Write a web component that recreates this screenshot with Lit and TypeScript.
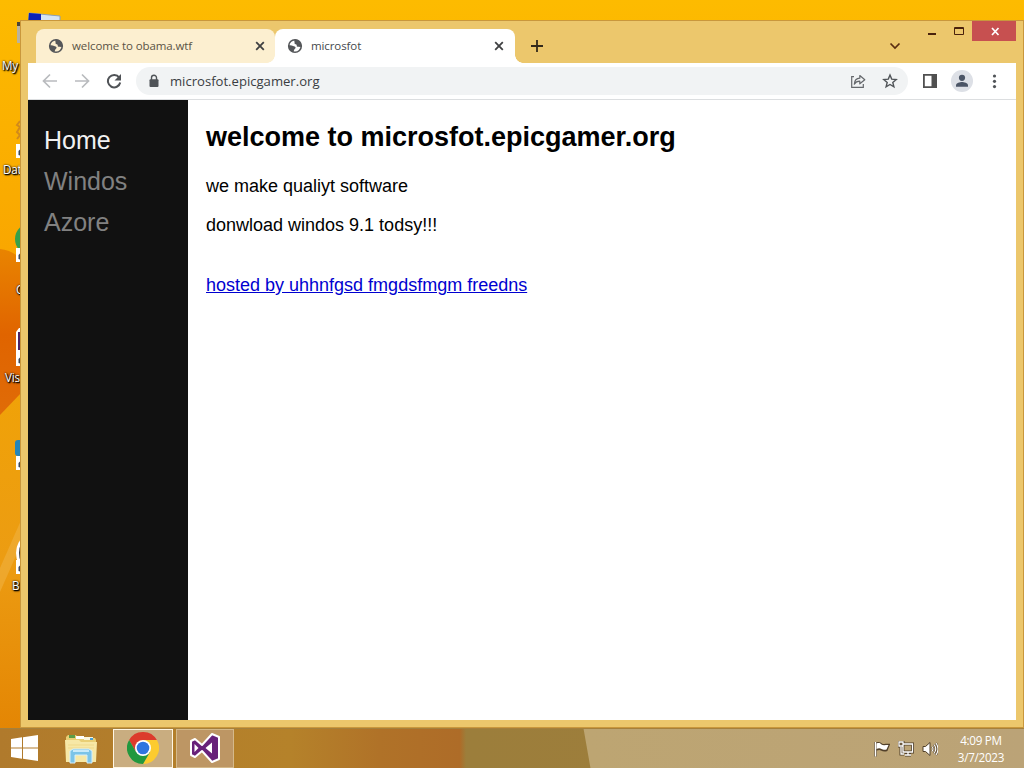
import { LitElement, html, svg, css } from 'lit';
import { customElement, property } from 'lit/decorators.js';
import { classMap } from 'lit/directives/class-map.js';

const globe = svg`
  <circle cx="8" cy="8" r="6.3" fill="none" stroke="#55575a" stroke-width="1.6"/>
  <path fill="#55575a" d="M8.6 1.6c-1.4.3-1.6 1-1.2 1.9.5 1-.2 1.5.3 2.2.6.6 1.4.3 1.9 1 .5.8-.3 1.3.5 1.9.9.6 1.7-.2 2.5.3.6.4 1.2.1 2-.3C14.500 4.700 12 1.900 8.600 1.600z"/>
  <path fill="#55575a" d="M1.400 7.600c1.400-.5 3.600-.2 4.700.5.9.6 2.500.4 2.500 1.600 0 1-1.200 1-1.400 2-.2.9-.7 1.300-.5 2.600C4 14 1.500 11 1.400 7.600z"/>`;

@customElement('browser-tab')
export class BrowserTab extends LitElement {
  @property() label = '';
  @property({ type: Boolean, reflect: true }) active = false;

  static styles = css`
    :host {
      display: flex;
      width: 239px;
    }

    :host([active]) {
      width: 240px;
    }

    .tab {
      position: relative;
      flex: 1;
      display: flex;
      align-items: center;
      padding: 0 7px 0 12px;
      border-radius: 8px 8px 0 0;
      background: #fcefd0;
      color: #5a5345;
      font-family: 'Open Sans', 'Noto Sans', sans-serif;
    }

    .tab.active {
      padding-right: 8px;
      background: #fff;
      color: #45494d;
    }

    .tab.active::before,
    .tab.active::after {
      content: '';
      position: absolute;
      bottom: 0;
      width: 8px;
      height: 8px;
    }

    .tab.active::before {
      left: -8px;
      background: radial-gradient(circle at 0 0, transparent 7.5px, #fff 8px);
    }

    .tab.active::after {
      right: -8px;
      background: radial-gradient(circle at 100% 0, transparent 7.5px, #fff 8px);
    }

    .label {
      flex: 1;
      margin: 0 0 2px 8px;
      font-size: 11.5px;
      letter-spacing: -0.1px;
      white-space: nowrap;
    }
  `;

  render() {
    return html`
      <div class=${classMap({ tab: true, active: this.active })}>
        <svg width="16" height="16" viewBox="0 0 16 16">${globe}</svg>
        <span class="label">${this.label}</span>
        <svg width="16" height="16" viewBox="0 0 16 16">
          <path d="M4.200 4.200l7.600 7.600M11.800 4.200l-7.600 7.600" stroke="#3f4042" stroke-width="1.800"/>
        </svg>
      </div>
    `;
  }
}

@customElement('browser-window')
export class BrowserWindow extends LitElement {
  links = ['Home', 'Windos', 'Azore'];

  static styles = css`
    :host {
      display: flex;
      flex-direction: column;
      box-sizing: border-box;
      padding: 0 7px 7px 7px;
      border: 1px solid #c9973c;
      background: #ecc76c;
      font-family: 'Open Sans', 'Noto Sans', sans-serif;
    }

    .titlebar {
      display: flex;
      height: 42px;
      flex: none;
    }

    .tabs {
      display: flex;
      margin: 8px 0 0 8px;
    }

    .new-tab {
      margin: 8px 0 0 12px;
      padding: 8px 2px;
    }

    .spacer {
      flex: 1;
    }

    .tab-search {
      margin: 17px 20px 0 0;
    }

    .buttons {
      display: flex;
      align-items: flex-start;
    }

    .close {
      width: 44px;
      height: 20px;
      background: #c75050;
    }

    svg {
      display: block;
    }

    .toolbar {
      display: flex;
      align-items: center;
      height: 36px;
      flex: none;
      padding: 0 14px;
      border-bottom: 1px solid #dcdee0;
      background: #fff;
    }

    .nav {
      display: flex;
      gap: 16px;
      margin-right: 14px;
    }

    .omnibox {
      flex: 1;
      display: flex;
      align-items: center;
      height: 28px;
      padding: 0 10px;
      border-radius: 14px;
      background: #f1f3f4;
    }

    .url {
      flex: 1;
      margin-left: 8px;
      color: #3a3d42;
      font-size: 13.1px;
    }

    .omnibox-actions {
      display: flex;
      gap: 16px;
    }

    .actions {
      display: flex;
      align-items: center;
      gap: 13px;
      margin-left: 14px;
    }

    .page {
      flex: 1;
      display: flex;
      min-height: 0;
      background: #fff;
      font-family: 'Liberation Sans', Arial, sans-serif;
      font-size: 18px;
      line-height: 21px;
      color: #000;
    }

    .sidenav {
      width: 160px;
      box-sizing: border-box;
      padding-top: 20px;
      background: #111;
    }

    .sidenav a {
      display: block;
      padding: 6px 8px 6px 16px;
      color: #818181;
      font-size: 25px;
      line-height: 29px;
    }

    .sidenav a.current {
      color: #f1f1f1;
    }

    .main {
      padding: 0 18px;
    }

    h2 {
      margin: 22px 0 23px;
      font-size: 27px;
      line-height: 31px;
    }

    p {
      margin: 0 0 18px;
    }

    .host {
      display: inline-block;
      margin-top: 21px;
      color: #0000d0;
      text-decoration: underline;
    }
  `;

  renderTitlebar() {
    return html`
      <div class="titlebar">
        <div class="tabs">
          <browser-tab label="welcome to obama.wtf"></browser-tab>
          <browser-tab label="microsfot" active></browser-tab>
        </div>
        <div class="new-tab">
          <svg width="16" height="18" viewBox="0 0 16 18">
            <path d="M8 3v12M2 9h12" stroke="#33291a" stroke-width="1.8"/>
          </svg>
        </div>
        <div class="spacer"></div>
        <svg class="tab-search" width="16" height="16" viewBox="0 0 16 16">
          <path d="M3.500 5.500L8 10 12.500 5.500" fill="none" stroke="#5a2d10" stroke-width="1.700"/>
        </svg>
        <div class="buttons">
          <svg width="22" height="20" viewBox="0 0 22 20"><path d="M5 13h8" stroke="#4a220c" stroke-width="2"/></svg>
          <svg width="27" height="20" viewBox="0 0 27 20">
            <path d="M9.500 6.500h9v7h-9z M9 7.500h10" fill="none" stroke="#4a220c"/>
          </svg>
          <svg class="close" viewBox="0 0 44 20">
            <path d="M20 7l6.500 7M26.500 7l-6.500 7" stroke="#fff" stroke-width="1.700"/>
          </svg>
        </div>
      </div>
    `;
  }

  renderToolbar() {
    return html`
      <div class="toolbar">
        <div class="nav">
          <svg width="16" height="16" viewBox="0 0 16 16" fill="none" stroke="#b9bbbe" stroke-width="1.700">
            <path d="M15 8H2M8 1.500L1.500 8 8 14.500"/>
          </svg>
          <svg width="16" height="16" viewBox="0 0 16 16" fill="none" stroke="#b9bbbe" stroke-width="1.700">
            <path d="M1 8h13M8 1.500L14.500 8 8 14.500"/>
          </svg>
          <svg width="16" height="16" viewBox="0 0 16 16">
            <path d="M13.200 4.600A6.200 6.200 0 1 0 14.200 9.500" fill="none" stroke="#505357" stroke-width="2"/>
            <path d="M15 1v6.500H8.500z" fill="#505357"/>
          </svg>
        </div>
        <div class="omnibox">
          <svg width="16" height="16" viewBox="0 0 16 16">
            <rect x="3.500" y="6.300" width="9" height="7.700" rx="1" fill="#505458"/>
            <path d="M5.500 7V4.800a2.500 2.500 0 0 1 5 0V7" fill="none" stroke="#505458" stroke-width="1.400"/>
          </svg>
          <span class="url">microsfot.epicgamer.org</span>
          <div class="omnibox-actions">
            <svg width="16" height="16" viewBox="0 0 16 16" fill="none" stroke="#65686c" stroke-width="1.200">
              <path d="M4 3.600H1.700v10.700h11.600V11"/>
              <path d="M4.300 11.200c.2-3.800 2-5.800 5.500-6V2.500l5 4.200-5 4.100V8.200c-2.500 0-4.300.9-5.500 3z" stroke-linejoin="round"/>
            </svg>
            <svg width="16" height="16" viewBox="0 0 16 16" fill="none" stroke="#505458" stroke-width="1.400">
              <path d="M8 2l1.700 4.100 4.500.4-3.400 2.900 1.100 4.400L8 11.500l-3.900 2.300 1.100-4.400L1.800 6.500l4.500-.4z"/>
            </svg>
          </div>
        </div>
        <div class="actions">
          <svg width="16" height="16" viewBox="0 0 16 16">
            <path d="M1.900 1.900h12.200v12.200H1.900z" fill="#fff" stroke="#505050" stroke-width="1.800"/>
            <path d="M9.500 2h5v12h-5z" fill="#505050"/>
          </svg>
          <svg width="22" height="22" viewBox="0 0 22 22">
            <circle cx="11" cy="11" r="11" fill="#dde0e6"/>
            <circle cx="11" cy="7.800" r="3.100" fill="#4b5566"/>
            <path d="M5 16.800v-1.600c0-2 4-3.200 6-3.200s6 1.200 6 3.200v1.600z" fill="#4b5566"/>
          </svg>
          <svg width="16" height="16" viewBox="0 0 16 16" fill="#505458">
            <circle cx="8.500" cy="3" r="1.600"/><circle cx="8.500" cy="8.300" r="1.600"/><circle cx="8.500" cy="13.600" r="1.600"/>
          </svg>
        </div>
      </div>
    `;
  }

  render() {
    return html`
      ${this.renderTitlebar()}
      ${this.renderToolbar()}
      <div class="page">
        <nav class="sidenav">
          ${this.links.map((link, i) => html`<a class=${classMap({ current: i === 0 })}>${link}</a>`)}
        </nav>
        <div class="main">
          <h2>welcome to microsfot.epicgamer.org</h2>
          <p>we make qualiyt software</p>
          <p>donwload windos 9.1 todsy!!!</p>
          <a class="host">hosted by uhhnfgsd fmgdsfmgm freedns</a>
        </div>
      </div>
    `;
  }
}

@customElement('task-bar')
export class TaskBar extends LitElement {
  static styles = css`
    :host {
      display: flex;
      box-sizing: border-box;
      border-top: 1px solid #a5803c;
      background:
        linear-gradient(80deg, transparent 581px, #bda572 582px, #bba377 100%),
        linear-gradient(90deg, #b07a2c 0, #b5822a 290px, #b07228 380px, #ae6c28 460px, #9c7e3b 466px, #a07d3c 100%);
      font-family: 'Open Sans', 'Noto Sans', sans-serif;
    }

    .item {
      display: flex;
      align-items: center;
      justify-content: center;
      box-sizing: border-box;
      height: 39px;
    }

    .start {
      width: 50px;
    }

    .start svg {
      margin: 0 2px 2px 0;
    }

    .explorer {
      width: 62px;
    }

    .running {
      width: 58px;
      margin-left: 1px;
      padding-bottom: 1px;
      border: 1px solid #d5b98a;
      background: #bd9664;
    }

    .focused {
      width: 60px;
      border: 1px solid #fff6e4;
      background: #c9ad80;
      margin-right: 2px;
    }

    .tray {
      flex: 1;
      display: flex;
      align-items: center;
      justify-content: flex-end;
      gap: 8px;
    }

    .clock {
      width: 60px;
      margin: 0 13px 0 5px;
      color: #fff;
      font-size: 11.7px;
      line-height: 17px;
      letter-spacing: -0.3px;
      text-align: center;
    }
  `;

  render() {
    return html`
      <div class="item start">
        <svg width="28" height="28" viewBox="0 0 28 28" fill="#fff">
          <path d="M1 5l11-1.700v10.200H1zM13 3.200L28 1v12.500H13zM1 14.500h11v10.200L1 23zM13 14.500h15V27l-15-2.200z"/>
        </svg>
      </div>
      <div class="item explorer">
        <svg width="34" height="32" viewBox="0 0 34 32">
          <path d="M2 4l2-2h8l2 3h17l1 2v21H2z" fill="#e9cf75"/>
          <path d="M5 2h6v3H5z" fill="#5c9d48"/><path d="M12 3h8v3h-8z" fill="#fff"/>
          <path d="M20 4h9v3h-9z" fill="#fbf6dd"/><path d="M26 5h3v2h-3z" fill="#4a9fd5"/>
          <path d="M1 7h14l2 2h16l-1 20H2z" fill="#f7e8a6"/>
          <path d="M4 12h26M4 15h26" stroke="#efd98a"/>
          <path d="M6 30V18l3-2h16l3 2v12h-5v-8H11v8z" fill="#7cc4e8" stroke="#d6effa"/>
          <path d="M9 18h16" stroke="#c8eafa" stroke-width="2"/>
        </svg>
      </div>
      <div class="item running focused">
        <svg width="32" height="32" viewBox="0 0 32 32">
          <path d="M2.140 8A16 16 0 0 1 29.860 8L16 8l-7 12z" fill="#dc3b2c"/>
          <path d="M16 8h13.860A16 16 0 0 1 16 32l7-12z" fill="#fccb2e"/>
          <path d="M2.140 8L9.070 20 23 20 16 32A16 16 0 0 1 2.140 8z" fill="#22983e"/>
          <circle cx="16" cy="16" r="8" fill="#fff"/>
          <circle cx="16" cy="16" r="6.300" fill="#2f75e0"/>
        </svg>
      </div>
      <div class="item running">
        <svg width="32" height="32" viewBox="0 0 32 32" stroke-linejoin="round">
          <path d="M2 9l4-2 7 6L23 2l7 3v22l-7 3-10-11-7 6-4-2z" fill="#68217a" stroke="#fff" stroke-width="2"/>
          <path d="M5.500 12v8l4-4zM16.500 16l6.500 5.500v-11z" fill="#fff"/>
        </svg>
      </div>
      <div class="tray">
        <svg width="16" height="16" viewBox="0 0 16 16">
          <path d="M1.500 1v14.500M2.500 2.500c3-1 4 0 5 1s3.500.5 7 .5l-2 5c-2 .6-4 0-5-.6s-3-.9-5 0z" fill="#fff" stroke="#51402b" stroke-width="2.400"/>
          <path d="M1.500 1v14.500" stroke="#fff" stroke-width="1.400"/>
          <path d="M2.500 2.500c3-1 4 0 5 1s3.500.5 7 .5l-2 4.500c-2 .6-4 0-5-.6s-3-.9-5 0z" fill="#fff"/>
        </svg>
        <svg width="16" height="16" viewBox="0 0 16 16" fill="none">
          <path d="M5 3h9.500v8H5zM3 6v7h3M7 14h6M10 11v3M1 1h4v4H1z" stroke="#51402b" stroke-width="3"/>
          <path d="M5 3h9.500v8H5zM3 6v7h3M7 14h6M10 11v3M1 1h4v4H1z" stroke="#fff" stroke-width="1.300"/>
        </svg>
        <svg width="16" height="16" viewBox="0 0 16 16" fill="none">
          <path d="M10 5.500q2 2.500 0 5M12 3.500q3.500 4.500 0 9M14 2q4 6 0 12" stroke="#51402b" stroke-width="2"/>
          <path d="M10 5.500q2 2.500 0 5M12 3.500q3.500 4.500 0 9M14 2q4 6 0 12" stroke="#fff" stroke-width="1.1"/>
          <path d="M1 5.500h2.500L8 1.500v13l-4.500-4H1z" fill="#fff" stroke="#51402b"/>
        </svg>
        <div class="clock">4:09 PM<br>3/7/2023</div>
      </div>
    `;
  }
}

@customElement('app-root')
export class AppRoot extends LitElement {
  shortcuts = [
    {
      label: 'My',
      indent: 2,
      top: 0,
      art: svg`<path d="M29 13l31 3v10H29z" fill="#d6e4f2" stroke="#8aa0b8"/><path d="M29 13l12 1v10H28z" fill="#0a23b8"/><path d="M17 22h5v21h-5z" fill="#b9b2a0"/><path d="M17 22h4v4h-4z" fill="#4c4538"/>`,
    },
    {
      label: 'Dat',
      indent: 3,
      top: 104,
      art: svg`<path d="M20 17l-3 4 3 2-3 5 3 3-3 4" fill="none" stroke="#d18a1c" stroke-width="2"/>`,
    },
    {
      // the label wraps, only the second line sticks out from under the window
      label: html`<br>C`,
      indent: 16,
      top: 208,
      art: svg`<circle cx="31" cy="31" r="16" fill="#35a04a"/>`,
    },
    {
      label: 'Vis',
      indent: 5,
      top: 312,
      art: svg`<path d="M16 20l3-4h14v30H16z" fill="#fff"/><path d="M18 20h6v18h-6z" fill="#4b2266"/>`,
    },
    {
      label: '',
      indent: 0,
      top: 416,
      art: svg`<rect x="15" y="24" width="20" height="16" rx="3" fill="#2485b8"/>`,
    },
    {
      label: 'B',
      indent: 12,
      top: 520,
      art: svg`<ellipse cx="25" cy="33" rx="9" ry="15" fill="#fff"/><ellipse cx="26" cy="33" rx="7" ry="13" fill="#3b3b3b"/>`,
    },
  ];

  static styles = css`
    :host {
      position: relative;
      display: grid;
      grid-template-rows: 728px 40px;
      width: 1024px;
      height: 768px;
      overflow: hidden;
      background: #fcb900;
    }

    .desktop {
      position: relative;
      overflow: hidden;
    }

    .wallpaper {
      position: absolute;
      inset: 0;
    }

    .shortcut {
      position: absolute;
      left: 0;
      width: 64px;
    }

    .shortcut svg {
      display: block;
    }

    .shortcut span {
      display: block;
      margin-top: 1px;
      color: #fff;
      font: 11.7px/16px 'Open Sans', 'Noto Sans', sans-serif;
      letter-spacing: -0.2px;
      text-shadow: 1px 1px 2px #000, 0 0 2px #000, 1px 1px 1px #000;
    }

    browser-window {
      position: absolute;
      left: 20px;
      top: 20px;
      width: 1004px;
      height: 708px;
    }
  `;

  render() {
    return html`
      <div class="desktop">
        <svg class="wallpaper" width="1024" height="728" viewBox="0 0 1024 728">
          <defs>
            <linearGradient id="sun" x2="0" y2="1">
              <stop offset="0" stop-color="#fdbb00"/><stop offset="1" stop-color="#f9a600"/>
            </linearGradient>
            <linearGradient id="hill" x2="0" y2="1">
              <stop offset="0" stop-color="#e98400"/><stop offset=".5" stop-color="#e06400"/><stop offset="1" stop-color="#e06c08"/>
            </linearGradient>
            <linearGradient id="sand" x2="0" y2="1">
              <stop offset="0" stop-color="#f0a208"/><stop offset=".5" stop-color="#ec9c12"/><stop offset="1" stop-color="#e48604"/>
            </linearGradient>
          </defs>
          <path d="M0 0h1024v260H0z" fill="url(#sun)"/>
          <path d="M0 249q12 1 24 12v160H0z" fill="url(#hill)"/>
          <path d="M0 415l22-23v336H0z" fill="url(#sand)"/>
          <path d="M0 568l22-50v24L0 592z" fill="#f0b040" opacity=".6"/>
        </svg>
        ${this.shortcuts.map((s, i) => html`
          <div class="shortcut" style="top: ${s.top}px">
            <svg width="64" height="56" viewBox="0 0 64 56">
              ${s.art}
              ${i > 0 ? svg`
                <path d="M16 40h12v14H16z" fill="#fff"/>
                <path d="M18.500 51v-4l3-3v8z" fill="#3a4657"/>` : ''}
            </svg>
            <span style="padding-left: ${s.indent}px">${s.label}</span>
          </div>
        `)}
        <browser-window></browser-window>
      </div>
      <task-bar></task-bar>
    `;
  }
}
